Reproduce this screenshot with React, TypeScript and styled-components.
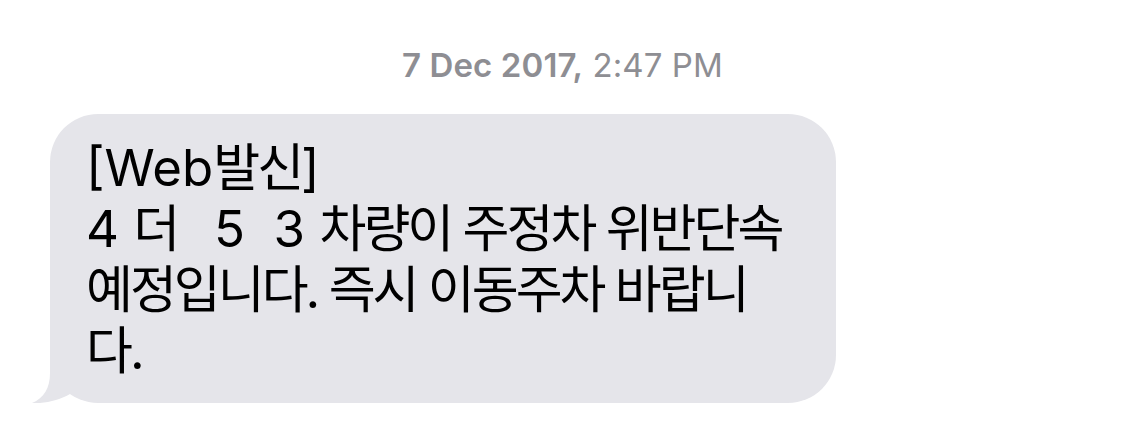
import React from "react";
import styled, { createGlobalStyle } from "styled-components";

const Global = createGlobalStyle`
  html, body { margin: 0; padding: 0; background: #ffffff; }
  body { width: 1125px; height: 448px; overflow: hidden; }
`;

const Screen = styled.div`
  display: flex;
  flex-direction: column;
  align-items: flex-start;
  padding-top: 46px;
  font-family: Inter, "Noto Sans CJK KR", sans-serif;
`;

const Stamp = styled.div`
  align-self: stretch;
  text-align: center;
  font-size: 33px;
  line-height: 38px;
  color: #8e8e93;
  letter-spacing: 0.1px;
`;

const StampDay = styled.span`
  font-weight: 600;
`;

const Row = styled.div`
  display: flex;
  padding-left: 50px;
  margin-top: 30px;
`;

const Bubble = styled.div`
  position: relative;
  box-sizing: border-box;
  width: 786px;
  height: 289px;
  padding: 23px 0 0 36px;
  background: #e5e5ea;
  border-radius: 48px;
  color: #000000;
  font-family: Inter, "Noto Sans CJK KR", sans-serif;
  font-size: 51px;
  line-height: 61px;
`;

const Line = styled.div`
  white-space: pre;
`;

const Ko = styled.span`
  letter-spacing: -3px;
`;

const Digit = styled.span`
  margin-left: ${(p: { $gap?: number }) => p.$gap ?? 0}px;
`;

const Tail = styled.svg`
  position: absolute;
  left: -20px;
  bottom: 0;
  width: 70px;
  height: 55px;
  display: block;
`;

export default function App() {
  return (
    <>
      <Global />
      <Screen>
        <Stamp>
          <StampDay>7 Dec 2017,</StampDay> 2:47 PM
        </Stamp>
        <Row>
          <Bubble>
            <Tail viewBox="0 0 70 55">
              <path
                d="M20 0 L20 25 C20 40 14 50 2 55 C14 56 30 52 40 46 L40 0 Z"
                fill="#e5e5ea"
              />
            </Tail>
            <Line>
              [Web<Ko>발신</Ko>]
            </Line>
            <Line>
              4 <Ko>더</Ko>  <Digit $gap={8}>5</Digit>  3 <Ko>차량이 주정차 위반단속</Ko>
            </Line>
            <Line>
              <Ko>예정입니다. 즉시 이동주차 바랍니</Ko>
            </Line>
            <Line>
              <Ko>다.</Ko>
            </Line>
          </Bubble>
        </Row>
      </Screen>
    </>
  );
}
